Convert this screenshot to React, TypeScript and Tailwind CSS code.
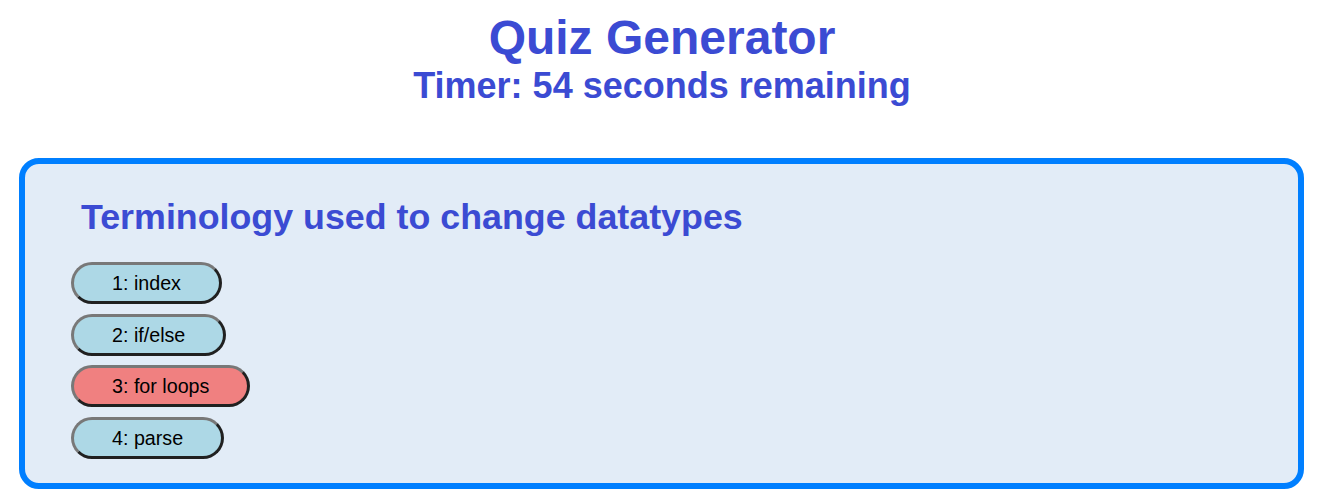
import React from 'react';

const options = [
  { label: '1: index', wrong: false },
  { label: '2: if/else', wrong: false },
  { label: '3: for loops', wrong: true },
  { label: '4: parse', wrong: false },
];

const App: React.FC = () => {
  return (
    <div className="min-h-[500px] bg-white font-['Liberation_Sans',Arial,sans-serif]">
      <header className="pt-[10px] pl-[7px] text-center font-bold text-[#3b4bd3]">
        <h1 className="text-[48px] leading-[55px]">Quiz Generator</h1>
        <h2 className="text-[36px] leading-[41px]">Timer: 54 seconds remaining</h2>
      </header>

      <div className="mt-[52px] ml-[19px] w-[1285px] rounded-[20px] border-[6px] border-[#007fff] bg-[#e2ecf7] pt-[33px] pb-[24px] pl-[46px]">
        <h3 className="ml-[10px] text-[35.8px] leading-[41px] font-bold text-[#3b4bd3]">
          Terminology used to change datatypes
        </h3>
        <div className="mt-[24px] flex flex-col items-start gap-[9.5px]">
          {options.map((o) => (
            <button
              key={o.label}
              className={`h-[42px] rounded-full border-[3px] border-t-[#787878] border-l-[#787878] border-b-[#202020] border-r-[#202020] px-[38px] text-[19.7px] leading-[22px] text-black ${
                o.wrong ? 'bg-[#f08080]' : 'bg-[#add8e6]'
              }`}
            >
              {o.label}
            </button>
          ))}
        </div>
      </div>
    </div>
  );
};

export default App;
